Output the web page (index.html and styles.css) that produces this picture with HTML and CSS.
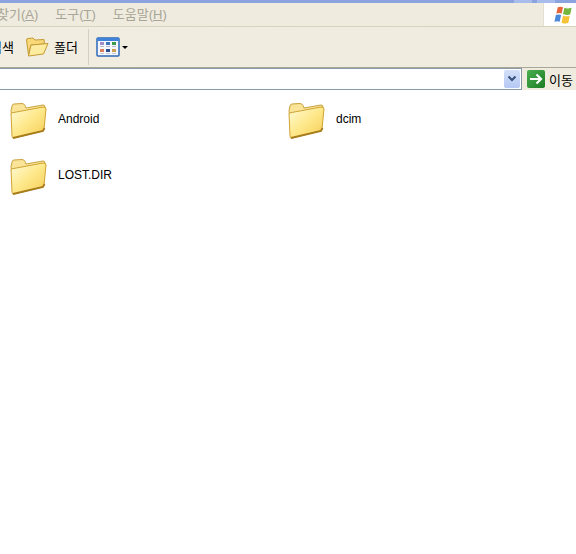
FILE: index.html
```html
<!DOCTYPE html>
<html lang="ko">
  <head>
    <meta charset="UTF-8" />
    <title>내 컴퓨터</title>
    <link rel="stylesheet" href="styles.css">
  </head>

  <body>
    <svg class="defs" width="0" height="0">
      <defs>
        <linearGradient id="folderFront" x1="0" y1="0" x2="1" y2="1">
          <stop offset="0" stop-color="#fffbd8" />
          <stop offset="0.5" stop-color="#fee88a" />
          <stop offset="1" stop-color="#f5cc55" />
        </linearGradient>
        <symbol id="folder" viewBox="0 0 38 38">
          <path d="M2 9 L3 4 Q3.500 2 5 2 L13 1.500 Q15 1.500 16 3.500 L17 6 L34 3 Q36 3 36 5 L36 9 L3 14 Z" fill="#f9e498" stroke="#c9a13c" />
          <path d="M2 11 L34 5 Q37 5 37 7 L35 27 Q35 28.500 33 29 L5 36 Q3 36.500 3 34 Z" fill="url(#folderFront)" stroke="#cfa433" />
          <path d="M4 36 L34 29 L35.500 26" fill="none" stroke="#a67c1c" stroke-width="1.800" />
        </symbol>
      </defs>
    </svg>

    <div class="top-strip">
      <span class="strip-btn"></span>
      <span class="strip-btn"></span>
    </div>

    <div class="menu-bar">
      <div class="menu-items">
        <span class="menu-item">찾기(<u>A</u>)</span>
        <span class="menu-item">도구(<u>T</u>)</span>
        <span class="menu-item">도움말(<u>H</u>)</span>
      </div>
      <div class="logo-box">
        <svg width="21" height="20" viewBox="0 0 22 20">
          <path d="M5 2 Q8 0.500 10.500 2 L9 8.500 Q6.500 7.500 3.500 8.500 Z" fill="#e8643a" />
          <path d="M12 2.500 Q15 4 19.500 2.500 L18 9.500 Q14.500 10.500 10.500 9 Z" fill="#74b63e" />
          <path d="M3 10 Q6 9 8.500 10 L7 17 Q4.500 16 1.500 17 Z" fill="#4a88dc" />
          <path d="M10.500 10.500 Q14 12 17.500 11 L16 18.500 Q12.500 19.500 9 18 Z" fill="#f4c234" />
        </svg>
      </div>
    </div>

    <div class="tool-bar">
      <span class="tool-label tool-search">검색</span>
      <svg class="tool-folder" width="24" height="22" viewBox="0 0 24 22">
        <path d="M1.500 4 Q1.500 2.500 3 2.500 L8 2 L10 4 L19 3.500 L19.500 8 L6 9 L3.500 19 Z" fill="#f8d878" stroke="#c49a34" />
        <path d="M6 9 L23 7.500 L18.500 18 L3.500 20 Z" fill="#fdeca0" stroke="#c49a34" />
      </svg>
      <span class="tool-label">폴더</span>
      <div class="tool-sep"></div>
      <svg class="view-icon" width="24" height="20" viewBox="0 0 24 20">
        <rect x="1" y="1" width="22" height="18" rx="1" fill="#f4f8fe" stroke="#2c68b8" stroke-width="1.500" />
        <rect x="1" y="1" width="22" height="3" fill="#3f82d8" />
        <rect x="4" y="5" width="4" height="3" fill="#a18cc8" />
        <rect x="10" y="5" width="4" height="3" fill="#3f74b8" />
        <rect x="16" y="5" width="4" height="3" fill="#3c9a48" />
        <rect x="4" y="9" width="4" height="1" fill="#b8b8c8" />
        <rect x="10" y="9" width="4" height="1" fill="#b8b8c8" />
        <rect x="16" y="9" width="4" height="1" fill="#b8b8c8" />
        <rect x="4" y="12" width="4" height="3" fill="#dd8058" />
        <rect x="10" y="12" width="4" height="3" fill="#2b4c90" />
        <rect x="16" y="12" width="4" height="3" fill="#c9a050" />
        <rect x="4" y="16" width="4" height="1" fill="#c8c8d0" />
        <rect x="10" y="16" width="4" height="1" fill="#c8c8d0" />
        <rect x="16" y="16" width="4" height="1" fill="#c8c8d0" />
      </svg>
      <span class="view-arrow"></span>
    </div>

    <div class="address-bar">
      <div class="address-box">
        <span class="address-drop">
          <svg width="10" height="8" viewBox="0 0 10 8">
            <path d="M1.500 1.500 L5 5 L8.500 1.500" fill="none" stroke="#36507e" stroke-width="2" />
          </svg>
        </span>
      </div>
      <span class="go-button">
        <svg width="14" height="12" viewBox="0 0 14 12">
          <path d="M1 6 H12 M7.500 1.500 L12 6 L7.500 10.500" fill="none" stroke="#fff" stroke-width="2.200" />
        </svg>
      </span>
      <span class="go-label">이동</span>
    </div>

    <div class="file-list">
      <div class="file-item">
        <svg class="folder-icon" width="38" height="38"><use href="#folder" /></svg>
        <span class="file-name">Android</span>
      </div>
      <div class="file-item">
        <svg class="folder-icon" width="38" height="38"><use href="#folder" /></svg>
        <span class="file-name">dcim</span>
      </div>
      <div class="file-item">
        <svg class="folder-icon" width="38" height="38"><use href="#folder" /></svg>
        <span class="file-name">LOST.DIR</span>
      </div>
    </div>
  </body>
</html>
```

FILE: styles.css
```css
html,
body {
  height: 100%;
}

body {
  margin: 0;
  overflow: hidden;
  background-color: #fff;
  font-family: "Liberation Sans", "Noto Sans CJK KR", sans-serif;
  font-size: 12px;
  color: #000;
}

.defs {
  display: block;
  height: 0;
}

.top-strip {
  display: flex;
  justify-content: flex-end;
  gap: 5px;
  height: 3px;
  padding-right: 21px;
  background-color: #8ba4e0;
}

.strip-btn {
  width: 18px;
  background-color: #a9bdec;
}

.menu-bar {
  display: flex;
  justify-content: space-between;
  height: 23px;
  background-color: #efebde;
  border-bottom: 1px solid #d8d2bd;
}

.menu-items {
  display: flex;
  align-items: center;
  gap: 17px;
  margin-left: -3px;
  margin-bottom: 2px;
  font-size: 13px;
  color: #a8a698;
}

.menu-item {
  white-space: nowrap;
}

.logo-box {
  display: flex;
  align-items: center;
  justify-content: center;
  box-sizing: border-box;
  width: 33px;
  padding-left: 7px;
  background-color: #fff;
  border-left: 1px solid #e4e0d0;
}

.tool-bar {
  display: flex;
  align-items: center;
  height: 40px;
  background: linear-gradient(to right, #f1eee1, #efebde);
  border-bottom: 1px solid #a9a797;
}

.tool-label {
  margin-bottom: 2px;
  font-size: 13px;
  white-space: nowrap;
}

.tool-search {
  margin-left: -10px;
}

.tool-folder {
  margin-left: 11px;
  margin-right: 5px;
}

.tool-sep {
  width: 1px;
  height: 36px;
  margin-left: 10px;
  margin-right: 7px;
  background-color: #d3d0c0;
}

.view-arrow {
  width: 0;
  height: 0;
  margin-left: 2px;
  border-left: 3px solid transparent;
  border-right: 3px solid transparent;
  border-top: 3px solid #000;
}

.address-bar {
  display: flex;
  align-items: center;
  height: 22px;
  background-color: #efebde;
}

.address-box {
  display: flex;
  justify-content: flex-end;
  align-items: center;
  box-sizing: border-box;
  width: 522px;
  height: 22px;
  background-color: #fff;
  border: 1px solid #8a9aa8;
  border-left: none;
  padding-right: 1px;
}

.address-drop {
  display: flex;
  align-items: center;
  justify-content: center;
  width: 16px;
  height: 18px;
  background: linear-gradient(#d4e0f8, #b4c8f4);
  border-radius: 2px;
}

.go-button {
  display: flex;
  align-items: center;
  justify-content: center;
  width: 18px;
  height: 18px;
  margin-left: 5px;
  background: linear-gradient(135deg, #4bb04f, #1b7c24);
  border-radius: 2px;
}

.go-label {
  margin-left: 4px;
  font-size: 13px;
  white-space: nowrap;
}

.file-list {
  display: grid;
  grid-template-columns: 278px 278px;
  grid-auto-rows: 56px;
  padding-top: 3px;
  padding-left: 9px;
}

.file-item {
  display: flex;
  align-items: center;
  gap: 11px;
  height: 56px;
}

.file-name {
  margin-bottom: 5px;
  white-space: nowrap;
}
```
